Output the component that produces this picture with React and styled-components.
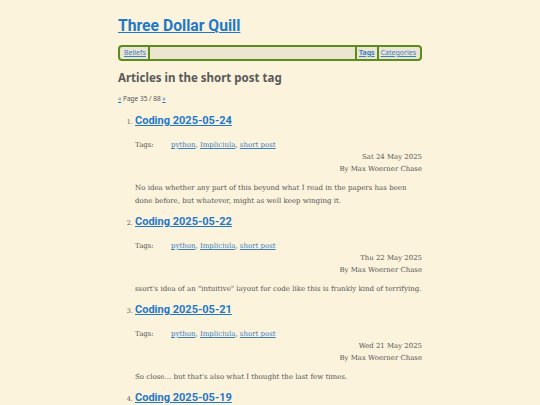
import React from 'react';
import styled, { createGlobalStyle } from 'styled-components';

const GlobalStyle = createGlobalStyle`
    html, body {
        margin:0;
        padding:0;
        background:#fcf3dc;
    }
    body {
        color:#555555;
        font-family:"DejaVu Serif", serif;
    }
`;

const Page = styled.div`
    width:304px;
    margin:0 auto;
    padding-top:15px;
`;

const SiteTitle = styled.a`
    display:block;
    font-family:Roboto, "Noto Sans", sans-serif;
    font-size:15.7px;
    font-weight:bold;
    color:#1f78c8;
    text-decoration:underline;
    line-height:22px;
`;

const Nav = styled.nav`
    display:flex;
    justify-content:space-between;
    margin-top:8px;
    height:12px;
    padding:0 2px;
    border:2px solid #5b8c1c;
    border-radius:4px;
    background:#ebe5d2;
    font-family:"Noto Sans", sans-serif;
    font-size:7px;
    line-height:12px;
`;

const NavGroup = styled.div`
    display:flex;
`;

const NavLink = styled.a`
    padding:0 2px;
    color:#3b7fc4;
    font-weight:${p => (p.$current ? 'bold' : 'normal')};
    text-decoration:underline;
    border-left:${p => (p.$side === 'left' ? '2px solid #5b8c1c' : 'none')};
    border-right:${p => (p.$side === 'right' ? '2px solid #5b8c1c' : 'none')};
`;

const Heading = styled.h2`
    margin:9px 0 0;
    font-family:"Noto Sans", sans-serif;
    font-size:11.5px;
    font-weight:bold;
    color:#5a5a5a;
    line-height:16px;
`;

const Pager = styled.div`
    margin-top:7px;
    font-family:"Noto Sans", sans-serif;
    font-size:6.5px;
    color:#555555;
    line-height:12px;
`;

const PagerLink = styled.a`
    color:#1f78c8;
    text-decoration:underline;
`;

const List = styled.ol`
    margin:4px 0 0;
    padding-left:17px;
`;

const Item = styled.li`
    margin-bottom:3px;
    &::marker {
        font-family:"DejaVu Serif", serif;
        font-size:6.5px;
        color:#555555;
    }
`;

const ItemTitle = styled.a`
    font-family:Roboto, "Noto Sans", sans-serif;
    font-size:11px;
    font-weight:bold;
    color:#1f78c8;
    text-decoration:underline;
    line-height:20px;
`;

const TagRow = styled.div`
    display:flex;
    margin-top:8px;
    font-size:7px;
    line-height:12px;
`;

const TagLabel = styled.span`
    width:36px;
`;

const TagLink = styled.a`
    color:#3b7fc4;
    text-decoration:underline;
`;

const Byline = styled.div`
    text-align:right;
    font-size:6.95px;
    line-height:12px;
`;

const Summary = styled.p`
    margin:6px 0 0;
    font-size:7.05px;
    line-height:13px;
`;

const posts = [
    {
        title: 'Coding 2025-05-24',
        date: 'Sat 24 May 2025',
        text: 'No idea whether any part of this beyond what I read in the papers has been done before, but whatever, might as well keep winging it.',
    },
    {
        title: 'Coding 2025-05-22',
        date: 'Thu 22 May 2025',
        text: 'ssort\'s idea of an "intuitive" layout for code like this is frankly kind of terrifying.',
    },
    {
        title: 'Coding 2025-05-21',
        date: 'Wed 21 May 2025',
        text: 'So close... but that\'s also what I thought the last few times.',
    },
    {
        title: 'Coding 2025-05-19',
        date: 'Mon 19 May 2025',
        text: '',
    },
];

const tags = ['python', 'Impliciula', 'short post'];

function App() {
    return (
        <>
            <GlobalStyle />
            <Page>
                <SiteTitle href="#">Three Dollar Quill</SiteTitle>
                <Nav>
                    <NavGroup>
                        <NavLink href="#" $side="right">Beliefs</NavLink>
                    </NavGroup>
                    <NavGroup>
                        <NavLink href="#" $side="left" $current>Tags</NavLink>
                        <NavLink href="#" $side="left">Categories</NavLink>
                    </NavGroup>
                </Nav>
                <Heading>Articles in the short post tag</Heading>
                <Pager>
                    <PagerLink href="#">«</PagerLink> Page 35 / 88 <PagerLink href="#">»</PagerLink>
                </Pager>
                <List>
                    {posts.map(post => (
                        <Item key={post.title}>
                            <ItemTitle href="#">{post.title}</ItemTitle>
                            <TagRow>
                                <TagLabel>Tags:</TagLabel>
                                <span>
                                    {tags.map((tag, i) => (
                                        <React.Fragment key={tag}>
                                            <TagLink href="#">{tag}</TagLink>
                                            {i < tags.length - 1 ? ', ' : ''}
                                        </React.Fragment>
                                    ))}
                                </span>
                            </TagRow>
                            <Byline>{post.date}</Byline>
                            <Byline>By Max Woerner Chase</Byline>
                            {post.text && <Summary>{post.text}</Summary>}
                        </Item>
                    ))}
                </List>
            </Page>
        </>
    );
}

export default App;
